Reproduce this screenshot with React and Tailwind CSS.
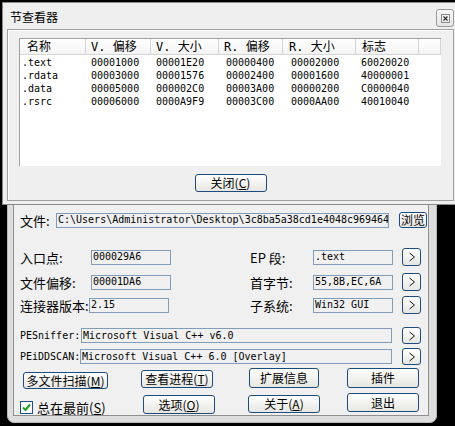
import React from 'react';

const cjk = "font-['Noto_Sans_CJK_SC',sans-serif]";
const mono = "font-['DejaVu_Sans_Mono','Noto_Sans_CJK_SC',monospace]";

const cols = [
  { w: 'w-[66px] pl-[2px]', hw: 'w-[66px] pl-[7px]', title: '名称' },
  { w: 'w-[65px] pl-[5px]', hw: 'w-[65px] pl-[5px]', title: 'V. 偏移' },
  { w: 'w-[68px] pl-[5px]', hw: 'w-[68px] pl-[5px]', title: 'V. 大小' },
  { w: 'w-[64px] pl-[7px]', hw: 'w-[64px] pl-[5px]', title: 'R. 偏移' },
  { w: 'w-[73px] pl-[8px]', hw: 'w-[73px] pl-[6px]', title: 'R. 大小' },
  { w: 'w-[63px] pl-[5px]', hw: 'w-[63px] pl-[6px]', title: '标志' },
];

const sections = [
  ['.text', '00001000', '00001E20', '00000400', '00002000', '60020020'],
  ['.rdata', '00003000', '00001576', '00002400', '00001600', '40000001'],
  ['.data', '00005000', '000002C0', '00003A00', '00000200', 'C0000040'],
  ['.rsrc', '00006000', '0000A9F9', '00003C00', '0000AA00', '40010040'],
];

function Btn({ className = '', children }) {
  return (
    <div className={`flex items-center justify-center whitespace-nowrap rounded-[3px] border border-[#1d4b7e] bg-linear-to-b from-white to-[#e6e6e2] text-[12px] leading-none text-black ${cjk} ${className}`}>
      {children}
    </div>
  );
}

function ArrowBtn({ className = 'h-[18px]' }) {
  return (
    <Btn className={`w-[19px] ${className}`}>
      <svg width="8" height="10" viewBox="0 0 8 10">
        <path d="M1.5 1 L6.5 5 L1.5 9" fill="none" stroke="#1a1a1a" strokeWidth="1" />
      </svg>
    </Btn>
  );
}

function Field({ className = '', children }) {
  return (
    <div className={`flex h-[15px] items-center overflow-hidden whitespace-nowrap border border-[#7f9db9] px-[1px] text-[10px] leading-none text-black ${mono} ${className}`}>
      {children}
    </div>
  );
}

function Label({ className = '', children }) {
  return <div className={`shrink-0 text-[13px] leading-none text-black ${cjk} ${className}`}>{children}</div>;
}

const SectionViewer = () => (
  <div className="absolute left-[2px] top-[2px] flex h-[203px] w-[454px] flex-col border border-[#8a8a8a] bg-[#efefef]">
    {/* title bar */}
    <div className="flex h-[26px] shrink-0 items-start justify-between pr-[1px]">
      <div className={`pl-[7px] pt-[8px] text-[12px] leading-none text-black ${cjk}`}>节查看器</div>
      <div className="mt-[6px] flex h-[18px] w-[18px] items-center justify-center rounded-[3px] border border-[#9a9a9a] bg-linear-to-b from-[#fbfbfb] to-[#e4e4e4]">
        <svg width="9" height="9" viewBox="0 0 9 9">
          <rect x="0.5" y="0.5" width="8" height="8" fill="none" stroke="#8a8a8a" strokeWidth="1" />
          <path d="M2.5 2.5 L6.5 6.5 M6.5 2.5 L2.5 6.5" stroke="#333" strokeWidth="1.2" />
        </svg>
      </div>
    </div>

    {/* frame */}
    <div className="ml-[4px] mr-[1px] flex h-[172px] flex-col items-center border border-[#a0a0a0] shadow-[inset_1px_1px_0_#ffffff]">
      <div className="ml-[11px] mt-[8px] h-[128px] w-[422px] self-start border-l border-t border-[#a0a0a0] bg-white">
        <div className="flex h-[16px] border-b border-[#d5d5d5] bg-linear-to-b from-white to-[#f4f4f4]">
          {cols.map((c) => (
            <div key={c.title} className={`flex h-full items-center border-r border-[#d5d5d5] text-[12px] leading-none text-black ${mono} ${c.hw}`}>
              {c.title}
            </div>
          ))}
          <div className="h-full w-[22px] border-r border-[#d5d5d5]" />
        </div>
        <div className="pt-[1px]">
          {sections.map((row) => (
            <div key={row[0]} className="flex h-[13px] items-center">
              {row.map((v, i) => (
                <div key={i} className={`text-[10px] leading-none text-black ${mono} ${cols[i].w}`}>
                  {v}
                </div>
              ))}
            </div>
          ))}
        </div>
      </div>
      <Btn className="mt-[8px] h-[18px] w-[72px]">
        关闭(<span className="underline">C</span>)
      </Btn>
    </div>
  </div>
);

const MainWindow = () => (
  <div className="absolute left-[7px] top-[196px] flex h-[227px] w-[430px] flex-col rounded-b-[7px] border border-[#b9b9b9] bg-[#dedede] pb-[6px] pl-[5px] pr-[7px]">
    <div className="flex flex-1 flex-col border border-[#8e8e8e] bg-[#f0f0f0]">
      {/* file path */}
      <div className="mt-[14px] flex h-[16px] items-center pl-[6px]">
        <Label className="w-[36px]">文件:</Label>
        <Field className="w-[333px] bg-[#f0f0f0]">C:\Users\Administrator\Desktop\3c8ba5a38cd1e4048c969464</Field>
        <Btn className="ml-[10px] h-[16px] w-[28px]">浏览</Btn>
      </div>

      <div className="mt-[20px] flex h-[18px] items-center pl-[6px]">
        <Label className="w-[71px]">入口点:</Label>
        <Field className="w-[80px]">000029A6</Field>
        <div className="w-[79px]" />
        <Label className="w-[63px]">EP 段:</Label>
        <Field className="w-[80px]">.text</Field>
        <div className="ml-[9px]"><ArrowBtn /></div>
      </div>

      <div className="mt-[7px] flex h-[18px] items-center pl-[6px]">
        <Label className="w-[71px]">文件偏移:</Label>
        <Field className="w-[80px]">00001DA6</Field>
        <div className="w-[79px]" />
        <Label className="w-[63px]">首字节:</Label>
        <Field className="w-[80px]">55,8B,EC,6A</Field>
        <div className="ml-[9px]"><ArrowBtn /></div>
      </div>

      <div className="mt-[5px] flex h-[18px] items-center pl-[6px]">
        <Label className="w-[69px]">连接器版本:</Label>
        <Field className="w-[80px]">2.15</Field>
        <div className="w-[81px]" />
        <Label className="w-[63px]">子系统:</Label>
        <Field className="w-[80px]">Win32 GUI</Field>
        <div className="ml-[9px]"><ArrowBtn /></div>
      </div>

      <div className="mt-[13px] flex h-[17px] items-center pl-[6px]">
        <div className={`w-[61px] shrink-0 text-[10px] leading-none text-black ${mono}`}>PESniffer:</div>
        <Field className="w-[311px]">Microsoft Visual C++ v6.0</Field>
        <div className="ml-[10px]"><ArrowBtn className="h-[17px]" /></div>
      </div>

      <div className="mt-[4px] flex h-[17px] items-center pl-[6px]">
        <div className={`w-[60px] shrink-0 text-[10px] leading-none text-black ${mono}`}>PEiDDSCAN:</div>
        <Field className="w-[312px]">Microsoft Visual C++ 6.0 [Overlay]</Field>
        <div className="ml-[10px]"><ArrowBtn className="h-[17px]" /></div>
      </div>

      <div className="mt-[3px] flex h-[21px] items-start pl-[9px]">
        <Btn className="mt-[4px] h-[17px] w-[85px]">多文件扫描(<span className="underline">M</span>)</Btn>
        <Btn className="ml-[33px] mt-[2px] h-[18px] w-[72px]">查看进程(<span className="underline">T</span>)</Btn>
        <Btn className="ml-[36px] h-[20px] w-[70px]">扩展信息</Btn>
        <Btn className="ml-[28px] h-[20px] w-[72px]">插件</Btn>
      </div>

      <div className="mt-[4px] flex h-[21px] items-start pl-[6px]">
        <div className="flex w-[123px] items-center pt-[8px]">
          <div className="flex h-[13px] w-[13px] items-center justify-center border border-[#1c5180] bg-white">
            <svg width="9" height="9" viewBox="0 0 9 9">
              <path d="M1 4.5 L3.5 7 L8 1.5" fill="none" stroke="#21a121" strokeWidth="2" />
            </svg>
          </div>
          <Label className="ml-[4px]">总在最前(<span className="underline">S</span>)</Label>
        </div>
        <Btn className="mt-[2px] h-[19px] w-[72px]">选项(<span className="underline">O</span>)</Btn>
        <Btn className="ml-[33px] mt-[2px] h-[18px] w-[72px]">关于(<span className="underline">A</span>)</Btn>
        <Btn className="ml-[27px] h-[19px] w-[72px]">退出</Btn>
      </div>
    </div>
  </div>
);

const App = () => {
  return (
    <div className="relative h-[426px] w-[455px] overflow-hidden bg-black">
      <MainWindow />
      <SectionViewer />
    </div>
  );
};

export default App;
